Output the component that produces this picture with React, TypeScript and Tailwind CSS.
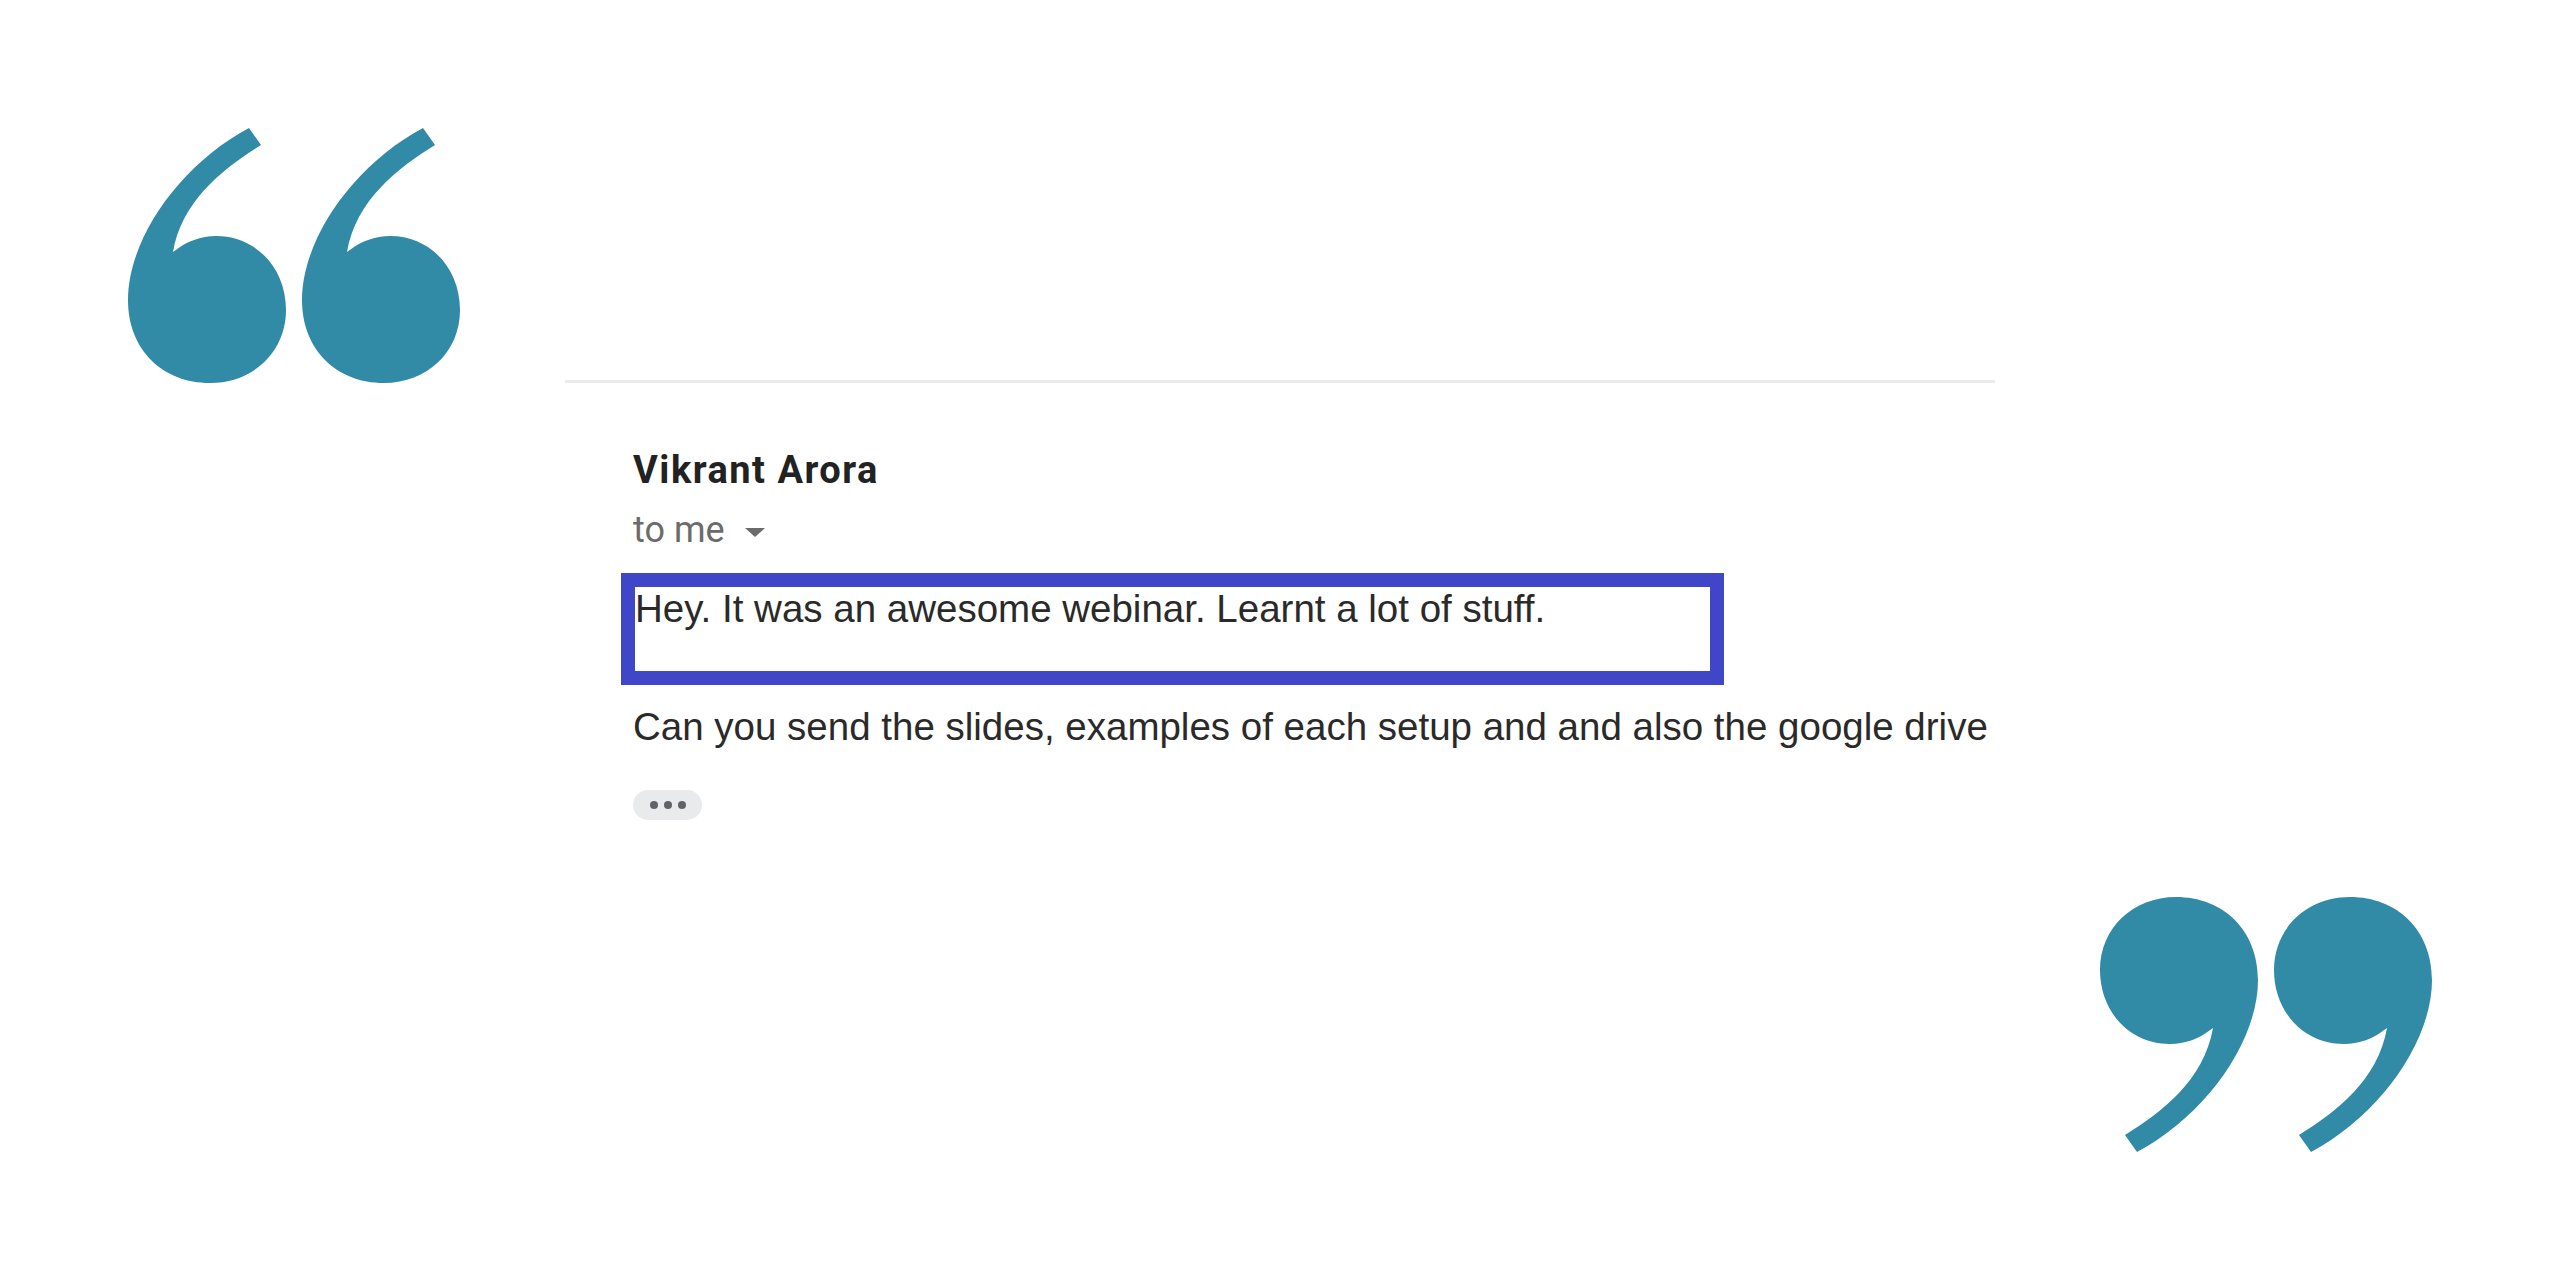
import React from 'react';

const QuoteMarks: React.FC<{ flip?: boolean }> = ({ flip }) => {
  // one mark is ~158x255, two of them side by side with a 16px gap
  const mark =
    'M121 0 L133 17 C96 40 54 72 45 124 C59 113 73 108 88 108 C128 108 158 140 158 182 C158 224 125 255 82 255 C35 255 0 222 0 172 C0 110 53 36 121 0 Z';
  return (
    <svg
      width="336"
      height="256"
      viewBox="0 0 336 256"
      className={flip ? 'rotate-180' : ''}
    >
      <path d={mark} fill="#328ba6" />
      <path d={mark} fill="#328ba6" transform="translate(174 0)" />
    </svg>
  );
};

const App: React.FC = () => {
  return (
    <div className="min-h-[1280px] w-full bg-white flex flex-col">
      {/* opening quote */}
      <div className="pl-[128px] pt-[128px]">
        <QuoteMarks />
      </div>

      {/* email snippet */}
      <div className="ml-[565px] w-[1430px] -mt-[4px]">
        <div className="h-[3px] bg-[#ebebeb]" />

        <div className="pl-[68px] pt-[65px] flex flex-col items-start">
          <div className="text-[38px] leading-[44px] font-bold tracking-[1.5px] text-[#222222] font-['Roboto',sans-serif]">
            Vikrant Arora
          </div>
          <div className="mt-[16px] flex items-center gap-[20px] text-[36px] leading-[44px] text-[#6b6b6b] font-['Roboto',sans-serif]">
            <span>to me</span>
            <svg width="20" height="9" viewBox="0 0 20 9" className="mt-[4px]">
              <polygon points="0,0 20,0 10,9" fill="#6b6b6b" />
            </svg>
          </div>

          <div className="-ml-[12px] mt-[21px] w-[1103px] h-[112px] border-[14px] border-[#3f46c8]">
            <p className="text-[38.5px] leading-[44px] text-[#2a2a2a] font-['Liberation_Sans',Arial,sans-serif]">
              Hey. It was an awesome webinar. Learnt a lot of stuff.
            </p>
          </div>

          <p className="mt-[20px] text-[38.5px] leading-[44px] text-[#2a2a2a] whitespace-nowrap font-['Liberation_Sans',Arial,sans-serif]">
            Can you send the slides, examples of each setup and and also the google drive
          </p>

          <div className="mt-[41px] w-[69px] h-[30px] rounded-full bg-[#e9eaec] flex items-center justify-center gap-[6px]">
            <span className="w-[8px] h-[8px] rounded-full bg-[#5f6368]" />
            <span className="w-[8px] h-[8px] rounded-full bg-[#5f6368]" />
            <span className="w-[8px] h-[8px] rounded-full bg-[#5f6368]" />
          </div>
        </div>
      </div>

      {/* closing quote */}
      <div className="mt-[76px] pr-[128px] flex justify-end">
        <QuoteMarks flip />
      </div>
    </div>
  );
};

export default App;
